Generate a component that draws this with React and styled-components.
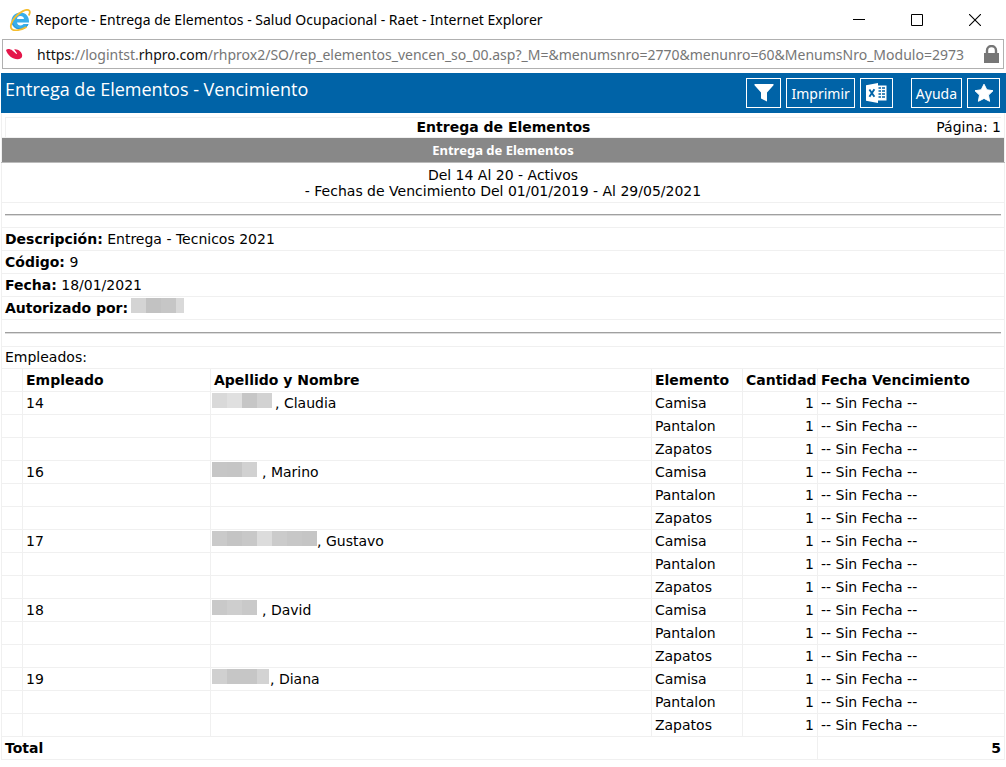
import React from "react";
import styled, { createGlobalStyle } from "styled-components";

const GlobalStyle = createGlobalStyle`
  body {
    margin: 0;
    background: #fff;
    color: #000;
    font-family: "DejaVu Sans", sans-serif;
    font-size: 14px;
  }
  * { box-sizing: border-box; }
`;

const uiFont = `"Noto Sans", "Open Sans", sans-serif`;

const TitleBar = styled.header`
  display: flex;
  align-items: center;
  height: 39px;
  padding: 0 8px 0 9px;
  gap: 4px;
  font-family: ${uiFont};
`;
const WindowTitle = styled.h1`
  flex: 1;
  margin: 0;
  font-size: 14px;
  font-weight: 400;
  white-space: nowrap;
`;
const WindowButtons = styled.div`
  display: flex;
  gap: 12px;
`;
const WindowButton = styled.button`
  display: flex;
  justify-content: center;
  align-items: center;
  width: 46px;
  height: 30px;
  padding: 0;
  border: 0;
  background: none;
`;

const AddressBar = styled.div`
  display: flex;
  align-items: center;
  height: 30px;
  margin: 0 2px 4px;
  padding: 0 4px 0 3px;
  border: 1px solid #b0b0b0;
  gap: 14px;
  font-family: ${uiFont};
  font-size: 14px;
  color: #767676;
`;
const Url = styled.div`
  flex: 1;
  white-space: nowrap;
`;
const Host = styled.span`
  color: #111;
`;

const Toolbar = styled.div`
  display: flex;
  justify-content: space-between;
  height: 40px;
  margin-left: 1px;
  padding: 5px 6px 5px 4px;
  background: #0063a7;
  color: #fff;
  font-family: ${uiFont};
`;
const ToolbarTitle = styled.h2`
  margin: 0;
  font-family: "Open Sans", sans-serif;
  font-size: 18px;
  line-height: 22px;
  font-weight: 400;
`;
const ToolGroup = styled.div`
  display: flex;
  gap: 5px;
`;
const Tools = styled.div`
  display: flex;
  gap: 18px;
`;
const ToolButton = styled.button`
  display: flex;
  justify-content: center;
  align-items: center;
  height: 30px;
  min-width: ${props => props.$wide ? "35px" : "33px"};
  padding: 0 ${props => props.$text ? "4px" : "0"};
  border: 1px solid #fff;
  background: #0063a7;
  color: #fff;
  font-family: ${uiFont};
  font-size: 14px;
`;

const Report = styled.table`
  width: calc(100% - 2px);
  margin: 0 1px;
  border-collapse: collapse;
  table-layout: fixed;
`;
const Col = styled.col`
  width: ${props => props.$width};
`;
const Cell = styled.td`
  height: 23px;
  padding: 0 3px;
  border: 1px solid #f0f0f0;
  line-height: 22px;
  text-align: ${props => props.$align || "left"};
  font-weight: ${props => props.$bold ? 700 : 400};
  white-space: nowrap;
`;
const HeadCell = styled(Cell).attrs({ as: "th", scope: "col" })`
  font-weight: 700;
`;
const PageCell = styled(Cell)`
  height: 24px;
  padding-top: 4px;
  border-top: 0;
  line-height: 19px;
`;
const PageHead = styled.div`
  display: grid;
  grid-template-columns: 1fr auto 1fr;
  border-top: 1px solid #f0f0f0;
  border-left: 1px solid #f0f0f0;
`;
const PageTitle = styled.strong`
  grid-column: 2;
`;
const PageNumber = styled.span`
  text-align: right;
`;
const BandCell = styled(Cell)`
  height: 25px;
  background: #888;
  border-bottom-color: #bbb;
  color: #fff;
  font-family: ${uiFont};
  font-size: 13px;
  font-weight: 700;
  text-align: center;
`;
const FilterCell = styled(Cell)`
  height: 40px;
  padding-top: 4px;
  line-height: 16px;
  text-align: center;
  vertical-align: top;
`;
const RuleCell = styled(Cell)`
  height: ${props => props.$tall ? "27px" : "25px"};
`;
const CaptionCell = styled(Cell)`
  height: 22px;
  line-height: 21px;
`;
const Rule = styled.hr`
  margin: 0;
  border: 0;
  border-top: 1px solid #a0a0a0;
  border-bottom: 1px solid #dcdcdc;
`;

const Mask = styled.span`
  display: inline-flex;
  height: 15px;
  margin-left: -2px;
  margin-right: ${props => props.$gap}px;
  vertical-align: 0;
`;
const Tile = styled.span`
  width: ${props => props.$width || 15}px;
  background: ${props => props.$tone};
`;

const employees = [
  { id: 14, name: "Claudia", gap: 3, tones: ["#d9d9d9", "#e0e0e0", "#c6c6c6", "#d2d2d2"] },
  { id: 16, name: "Marino", gap: 5, tones: ["#c6c6c6", "#c5c5c5", "#d1d1d1"] },
  { id: 17, name: "Gustavo", gap: 0, tones: ["#cacaca", "#c4c4c4", "#c8c8c8", "#dcdcdc", "#cbcbcb", "#c7c7c7", "#c5c5c5"] },
  { id: 18, name: "David", gap: 5, tones: ["#c9c9c9", "#cecece", "#c9c9c9"] },
  { id: 19, name: "Diana", gap: 1, last: 12, tones: ["#d0d0d0", "#c6c6c6", "#c6c6c6", "#d3d3d3"] },
];
const elements = ["Camisa", "Pantalon", "Zapatos"];

const Redacted = ({ tones, gap, last }) => (
  <Mask $gap={gap} aria-hidden="true">
    {tones.map((tone, i) => (
      <Tile key={i} $tone={tone} $width={i === tones.length - 1 ? last : 15} />
    ))}
  </Mask>
);

const ExplorerIcon = () => (
  <svg width="22" height="22" viewBox="0 0 22 22" fill="none">
    <path fillRule="evenodd" d="M20 13.500H8c.3 1.900 1.700 2.900 3.600 2.900 1.300 0 2.300-.5 2.900-1.400h5c-1.200 3.500-4.200 5.500-8.100 5.500-5.200 0-8.900-3.400-8.900-8.500 0-5 3.700-8.600 9-8.600 5.300 0 8.800 3.800 8.500 10.100zM8 9.900h7c-.3-1.800-1.600-2.800-3.500-2.800S8.300 8.100 8 9.900z" fill="#39aeea" />
    <path d="M3.400 13.500c.8 3.900 4 6.300 8.100 6.300 3.300 0 6-1.600 7.300-4.400" stroke="#2b8fd6" strokeWidth="1" />
    <path d="M17.500 18c-5.500 3.300-12.500 4.300-14.700 2.200-2.100-2-.7-7.500 3.600-12.300C11 2.700 17.200-.2 19.800 1.200c1.500.8 1.300 3-.1 5.300" stroke="#f5bd2f" strokeWidth="1.800" />
  </svg>
);

const RaetIcon = () => (
  <svg width="17" height="12" viewBox="0 0 17 12" fill="#e4164a">
    <path d="M0 1.900C1.700.6 4.300 1 6.400 2.600l3.700 3.100c.6.500 1.100 0 .7-.6L8.300 1.400c3.800-.4 7.900 2.700 7.900 6.300 0 2.300-2 3.500-4.700 3.500C6.700 11.200 1.600 7.200 0 1.900z" />
  </svg>
);

const LockIcon = () => (
  <svg width="15" height="19" viewBox="0 0 15 19">
    <path d="M3 9V5.500a4.500 4.500 0 0 1 9 0V9" fill="none" stroke="#767676" strokeWidth="2.400" />
    <path d="M0 8h15v10H0z" fill="#767676" />
  </svg>
);

const FilterIcon = () => (
  <svg width="20" height="20" viewBox="0 0 20 20" fill="#fff">
    <path d="M.5 1h19v1.200L13 9.500v9L7 15.500v-6L.5 2.200z" />
  </svg>
);

const ExcelIcon = () => (
  <svg width="21" height="20" viewBox="0 0 21 20">
    <path d="M11 2.500h9.500v15H11z" fill="#fff" />
    <path d="M12.500 5h2.500M16 5h3M12.500 8h2.500M16 8h3M12.500 11h2.500M16 11h3M12.500 14h2.500M16 14h3" stroke="#0063a7" strokeWidth="1.300" />
    <path d="M0 2.200 12 0v20L0 17.800z" fill="#fff" />
    <path d="M3.400 6.500l5 7.200M8.400 6.300l-5 7.400" stroke="#0063a7" strokeWidth="1.900" />
  </svg>
);

const StarIcon = () => (
  <svg width="20" height="20" viewBox="0 0 20 20" fill="#fff">
    <path d="M10 1.200l2.800 5.600 6.200.9-4.500 4.400 1.100 6.200L10 15.400l-5.600 2.900 1.100-6.200L1 7.700l6.200-.9z" stroke="#fff" strokeLinejoin="round" />
  </svg>
);

const App = () => (
  <>
    <GlobalStyle />
    <TitleBar>
      <ExplorerIcon />
      <WindowTitle>Reporte - Entrega de Elementos - Salud Ocupacional - Raet - Internet Explorer</WindowTitle>
      <WindowButtons>
        <WindowButton aria-label="Minimizar">
          <svg width="12" height="12" viewBox="0 0 12 12"><path d="M0 5.500h12" stroke="#000" /></svg>
        </WindowButton>
        <WindowButton aria-label="Maximizar">
          <svg width="12" height="12" viewBox="0 0 12 12"><path d="M.5.5h11v11H.5z" fill="none" stroke="#000" /></svg>
        </WindowButton>
        <WindowButton aria-label="Cerrar">
          <svg width="12" height="12" viewBox="0 0 12 12"><path d="M0 0l12 12M12 0L0 12" stroke="#000" strokeWidth="1.100" /></svg>
        </WindowButton>
      </WindowButtons>
    </TitleBar>
    <AddressBar>
      <RaetIcon />
      <Url>
        <Host>https</Host>://logintst.<Host>rhpro.com</Host>
        /rhprox2/SO/rep_elementos_vencen_so_00.asp?_M=&amp;menumsnro=2770&amp;menunro=60&amp;MenumsNro_Modulo=2973
      </Url>
      <LockIcon />
    </AddressBar>
    <Toolbar>
      <ToolbarTitle>Entrega de Elementos - Vencimiento</ToolbarTitle>
      <Tools>
        <ToolGroup>
          <ToolButton $wide aria-label="Filtrar"><FilterIcon /></ToolButton>
          <ToolButton $text>Imprimir</ToolButton>
          <ToolButton aria-label="Excel"><ExcelIcon /></ToolButton>
        </ToolGroup>
        <ToolGroup>
          <ToolButton $text>Ayuda</ToolButton>
          <ToolButton aria-label="Favoritos"><StarIcon /></ToolButton>
        </ToolGroup>
      </Tools>
    </Toolbar>
    <Report>
      <colgroup>
        <Col $width="21px" />
        <Col $width="188px" />
        <Col />
        <Col $width="91px" />
        <Col $width="75px" />
        <Col $width="187px" />
      </colgroup>
      <tbody>
        <tr>
          <PageCell colSpan={6}>
            <PageHead>
              <PageTitle>Entrega de Elementos</PageTitle>
              <PageNumber>Página: 1</PageNumber>
            </PageHead>
          </PageCell>
        </tr>
        <tr><BandCell colSpan={6}>Entrega de Elementos</BandCell></tr>
        <tr>
          <FilterCell colSpan={6}>
            Del 14 Al 20 - Activos<br />
            - Fechas de Vencimiento Del 01/01/2019 - Al 29/05/2021
          </FilterCell>
        </tr>
        <tr><RuleCell colSpan={6}><Rule /></RuleCell></tr>
        <tr><Cell colSpan={6}><strong>Descripción:</strong> Entrega - Tecnicos 2021</Cell></tr>
        <tr><Cell colSpan={6}><strong>Código:</strong> 9</Cell></tr>
        <tr><Cell colSpan={6}><strong>Fecha:</strong> 18/01/2021</Cell></tr>
        <tr>
          <Cell colSpan={6}>
            <strong>Autorizado por:</strong>{" "}
            <Redacted gap={0} last={8} tones={["#d4d4d4", "#c2c2c2", "#c6c6c6", "#d9d9d9"]} />
          </Cell>
        </tr>
        <tr><RuleCell $tall colSpan={6}><Rule /></RuleCell></tr>
        <tr><CaptionCell colSpan={6}>Empleados:</CaptionCell></tr>
        <tr>
          <Cell />
          <HeadCell>Empleado</HeadCell>
          <HeadCell>Apellido y Nombre</HeadCell>
          <HeadCell>Elemento</HeadCell>
          <HeadCell>Cantidad</HeadCell>
          <HeadCell>Fecha Vencimiento</HeadCell>
        </tr>
        {employees.map(employee => elements.map((element, i) => (
          <tr key={employee.id + element}>
            <Cell />
            <Cell>{i === 0 && employee.id}</Cell>
            <Cell>
              {i === 0 && (
                <>
                  <Redacted tones={employee.tones} gap={employee.gap} last={employee.last} />
                  , {employee.name}
                </>
              )}
            </Cell>
            <Cell>{element}</Cell>
            <Cell $align="right">1</Cell>
            <Cell>-- Sin Fecha --</Cell>
          </tr>
        )))}
        <tr>
          <Cell $bold colSpan={5}>Total</Cell>
          <Cell $bold $align="right">5</Cell>
        </tr>
      </tbody>
    </Report>
  </>
);

export default App;
